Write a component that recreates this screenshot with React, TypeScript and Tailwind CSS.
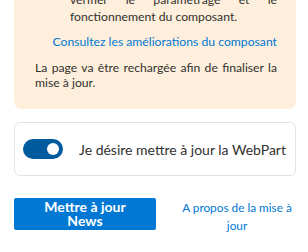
import { useState } from "react";

const font = { fontFamily: '"Segoe UI", Lato, "Open Sans", sans-serif' };

export default function App() {
	const [enabled, setEnabled] = useState(true);

	return (
		<div className="h-[252px] w-[308px] overflow-hidden bg-white" style={font}>
			<div className="-mt-[9px] pl-[14px] pr-[12px]">
				<div className="rounded-lg bg-[#fdefdb] pl-[21px] pr-[19px] pb-[19px] text-[12.2px] text-[#323130]">
					<ul className="pl-[35px] leading-[17px]">
						<li className="list-none">
							<div className="text-justify [text-align-last:justify]">vérifier le paramétrage et le</div>
							<div>fonctionnement du composant.</div>
						</li>
					</ul>
					<p className="mt-[9px] text-right leading-[16px]">
						<a href="#" className="text-[#0078d4] hover:underline">
							Consultez les améliorations du composant
						</a>
					</p>
					<p className="mt-[10px] text-justify leading-[15px]">
						La page va être rechargée afin de finaliser la mise à jour.
					</p>
				</div>

				<div className="mt-[13px] flex h-[54px] items-center gap-4 rounded-md border border-[#e3e3e3] bg-white px-[8px]">
					<button
						onClick={() => setEnabled((v) => !v)}
						className={`relative flex h-[20px] w-[40px] flex-shrink-0 items-center rounded-full ${enabled ? "bg-[#005a9e]" : "bg-[#c8c6c4]"}`}
					>
						<span className={`absolute h-[12px] w-[12px] rounded-full bg-white ${enabled ? "right-[4px]" : "left-[4px]"}`}></span>
					</button>
					<span className="text-[14px] text-[#323130]">Je désire mettre à jour la WebPart</span>
				</div>

				<div className="mt-[22px] flex items-start">
					<button className="flex h-[32px] w-[142px] flex-shrink-0 flex-col items-center justify-center rounded-[2px] bg-[#0078d4] text-[14px] font-bold leading-[14px] text-white">
						<span>Mettre à jour</span>
						<span>News</span>
					</button>
					<a href="#" className="ml-[22px] flex-1 pt-[1px] text-center text-[11.8px] leading-[18px] text-[#0078d4]">
						A propos de la mise à jour
					</a>
				</div>
			</div>
		</div>
	);
}
